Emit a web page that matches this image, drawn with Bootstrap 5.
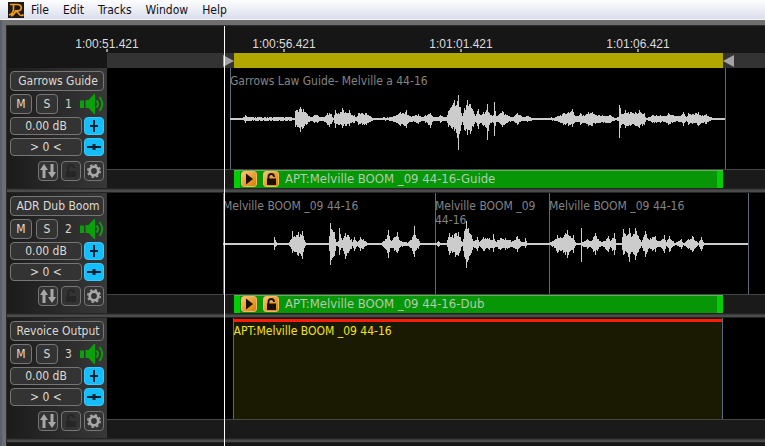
<!DOCTYPE html>
<html lang="en">
<head>
<meta charset="utf-8">
<meta name="viewport" content="width=device-width, initial-scale=1">
<title>Revoice session</title>
<link href="https://cdn.jsdelivr.net/npm/bootstrap@5.3.0/dist/css/bootstrap.min.css" rel="stylesheet">
<style>
  body { font-family: "DejaVu Sans Condensed", "Noto Sans", sans-serif; font-size: 12px; line-height: 14px; background: #161616; color: #d6d2cc; }
  button { font: inherit; }
  .menu-strip { height: 20px; padding-left: 8px; background: linear-gradient(#fdfdfe, #eef0f7 45%, #d9deec); border-bottom: 1px solid #f4f4f6; }
  .menu-strip a { color: #101018; }
  .menu-list { gap: 14px; margin-left: 7px; }
  .window-frame { border-left: 2px solid #56616f; background: #6e6e6e; padding: 5px 0 0 4px; }
  .session { border-left: 1px solid #2c2c2c; border-top: 1px solid #2c2c2c; background: #161616; }
  .side { width: 100px; flex: none; }
  .lane { flex: 1 1 0; min-width: 0; }
  .seg { flex-basis: 0; flex-shrink: 1; min-width: 0; }
  .ruler { height: 27px; font-family: "Liberation Sans", Arial, sans-serif; line-height: 14px; padding-top: 11px; }
  .ruler-label { width: 64px; margin-left: -32px; text-align: center; color: #dcdcdc; white-space: nowrap; }
  .ruler-label::after { content: ""; display: block; width: 2px; height: 3px; margin: -2px auto 0; background: #999; }
  .range { height: 15px; background: #333; }
  .range-fill { background: #b0a800; }
  .track-side { background: linear-gradient(90deg, #1b1b1b, #383838); padding: 3px 3px 0; }
  .tk { border: 1px solid #767676; border-radius: 4px; background: #333; color: #dedad4; padding: 0; line-height: 16px; }
  .tk-name { height: 20px; width: 94px; margin-bottom: 3px; padding-left: 2px; white-space: nowrap; }
  .tk-sq { height: 20px; width: 22px; }
  .tk-val { height: 18px; width: 72px; }
  .tk-blue { height: 18px; width: 20px; border-color: #35caff; background: #14bdfb; }
  .tk-ico { height: 20px; width: 20px; }
  .tk-row { margin-bottom: 3px; }
  .tk-last { gap: 3px; margin-top: 5px; }
  .tk svg, .spk svg { display: block; margin: auto; }
  .spk { width: 25px; height: 20px; border: 0; padding: 0; background: none; }
  .audio { height: 101px; background: #000; }
  .clip { color: #848484; }
  .clip, .clip-end { box-shadow: inset 1px 0 #5c6b7c; }
  .clip-name { padding-top: 6px; line-height: 14px; }
  .wave { fill: #ccc; }
  .apt-row { height: 19px; background: #1a1a1a; border-top: 1px solid #464646; }
  .apt { background: #069606; box-shadow: inset 0 1px #5cb45c, inset 6px 0 #06cc06, inset -6px 0 #06cc06; color: #b4ccb0; font-size: 13px; }
  .apt span { margin-left: 6px; }
  .apt-btn { width: 16px; height: 16px; border: 1px solid #f5b95c; border-radius: 3px; padding: 0; background: linear-gradient(135deg, #ffc36d, #d87c0a); }
  .apt-btn:first-child { margin-left: 7px; }
  .apt-btn + .apt-btn { margin-left: 6px; }
  .apt-btn svg { display: block; margin: auto; }
  .divider { height: 5px; background: linear-gradient(#242424 0 1px, #3a3a3a 1px 2px, #4b4b4b 2px 4px, #242424 4px); }
  .output { box-shadow: inset 1px 0 #5c6b7c, inset -1px 0 #5c6b7c; background: #1a1a02; color: #f6e316; padding: 1px 1px 0; }
  .output-bar { height: 3px; background: #ff1c06; margin-bottom: 2px; }
  .playhead-layer { left: 100px; right: 0; top: 0; bottom: 0; pointer-events: none; }
  .playhead { width: 1px; background: #fff; }
</style>
<script src="https://cdn.jsdelivr.net/npm/bootstrap@5.3.0/dist/js/bootstrap.bundle.min.js"></script>
</head>
<body class="d-flex flex-column min-vh-100 overflow-hidden">

<svg class="d-none" aria-hidden="true">
  <symbol id="i-speaker" viewBox="0 0 25 20"><path fill="#0aa00a" d="M1 6.500h4v7.500H1zM6.500 6h3l5.500-6h1v20h-1l-5.500-6h-3z"/><path d="M17.500 6.500q3 3.500 0 7M20.500 3q5.500 7 0 14" fill="none" stroke="#0aa00a" stroke-width="2"/></symbol>
  <symbol id="i-vol" viewBox="0 0 18 16"><path d="M9 2v12M5 8h8" stroke="#06222e" stroke-width="2" fill="none"/></symbol>
  <symbol id="i-pan" viewBox="0 0 18 16"><path d="M2 8h14" stroke="#06222e" stroke-width="2"/><path d="M7.500 5h3v6h-3z" fill="#06222e"/></symbol>
  <symbol id="i-arrows" viewBox="0 0 18 18"><path fill="#a8a8a8" d="M5 2l4 6H6.500v8h-3V8H1zM13 16l-4-6h2.500V2h3v8H17z"/></symbol>
  <symbol id="i-lock-off" viewBox="0 0 18 18"><path fill="#262626" d="M4 9h10v6H4z"/><path d="M6 9V6q0-3 3-3t3 3" fill="none" stroke="#262626" stroke-width="2"/></symbol>
  <symbol id="i-gear" viewBox="0 0 18 18"><circle cx="9" cy="9" r="4.300" fill="none" stroke="#a8a8a8" stroke-width="2.800"/><circle cx="9" cy="9" r="6.200" fill="none" stroke="#a8a8a8" stroke-width="1.600" stroke-dasharray="2.400 2.470"/></symbol>
  <symbol id="i-play" viewBox="0 0 14 14"><path d="M4 1.500l7 5.500-7 5.500z" fill="#1a0f02"/></symbol>
  <symbol id="i-lock" viewBox="0 0 14 14"><path fill="#1a0f02" d="M3 6.500h9V13H3z"/><path d="M4.500 7V4.500q0-2.500 2.700-2.500t2.800 2.500V5" fill="none" stroke="#1a0f02" stroke-width="1.800"/></symbol>
</svg>

<nav class="menu-strip d-flex align-items-center" aria-label="Main menu">
  <svg width="16" height="16" viewBox="0 0 16 16" role="img" aria-label="Revoice"><path fill="#1f1a14" d="M0 0h16v16H0z"/><path d="M2 2.500h8q3.300 .3 3.300 3.200t-3.300 3.200H8L12 13q1.500 1.300 3.500-.5M5.500 2.500V7q0 4.500-4.500 6M7.500 9Q7 12 3 14" fill="none" stroke="#f09a26" stroke-width="1.600"/></svg>
  <ul class="menu-list d-flex list-unstyled mb-0">
    <li><a class="text-decoration-none" href="#">File</a></li>
    <li><a class="text-decoration-none" href="#">Edit</a></li>
    <li><a class="text-decoration-none" href="#">Tracks</a></li>
    <li><a class="text-decoration-none" href="#">Window</a></li>
    <li><a class="text-decoration-none" href="#">Help</a></li>
  </ul>
</nav>

<main class="window-frame flex-grow-1 d-flex flex-column">
  <div class="session position-relative flex-grow-1">
    <div class="ruler d-flex">
      <div class="side"></div>
      <div class="lane d-flex">
        <div class="seg" style="flex-grow:177"><div class="ruler-label">1:00:51.421</div></div>
        <div class="seg" style="flex-grow:177"><div class="ruler-label">1:00:56.421</div></div>
        <div class="seg" style="flex-grow:177"><div class="ruler-label">1:01:01.421</div></div>
        <div class="seg" style="flex-grow:127"><div class="ruler-label">1:01:06.421</div></div>
      </div>
    </div>
    <div class="d-flex">
      <div class="side"></div>
      <div class="lane range d-flex">
        <div class="seg d-flex justify-content-end align-items-center" style="flex-grow:127"><svg width="11" height="12"><path d="M0 0l11 6-11 6z" fill="#a4a4a4"/></svg></div>
        <div class="seg range-fill" style="flex-grow:489"></div>
        <div class="seg d-flex align-items-center" style="flex-grow:42"><svg width="11" height="12"><path d="M11 0v12L0 6z" fill="#a4a4a4"/></svg></div>
      </div>
    </div>

    <section class="d-flex" aria-label="Garrows Guide">
      <div class="side track-side">
        <button class="tk tk-name d-block">Garrows Guide</button>
        <div class="tk-row d-flex align-items-center"><button class="tk tk-sq">M</button><button class="tk tk-sq ms-1">S</button><span class="flex-grow-1 text-center">1</span><button class="spk" aria-label="Monitor"><svg width="25" height="20"><use href="#i-speaker"/></svg></button></div>
        <div class="tk-row d-flex justify-content-between"><button class="tk tk-val">0.00 dB</button><button class="tk tk-blue" aria-label="Volume"><svg width="18" height="16"><use href="#i-vol"/></svg></button></div>
        <div class="tk-row d-flex justify-content-between"><button class="tk tk-val">&gt; 0 &lt;</button><button class="tk tk-blue" aria-label="Pan"><svg width="18" height="16"><use href="#i-pan"/></svg></button></div>
        <div class="tk-last d-flex justify-content-end"><button class="tk tk-ico" aria-label="Swap"><svg width="18" height="18"><use href="#i-arrows"/></svg></button><button class="tk tk-ico" aria-label="Lock"><svg width="18" height="18"><use href="#i-lock-off"/></svg></button><button class="tk tk-ico" aria-label="Settings"><svg width="18" height="18"><use href="#i-gear"/></svg></button></div>
      </div>
      <div class="lane">
        <div class="audio d-flex">
          <div class="seg" style="flex-grow:123"></div>
          <div class="seg clip position-relative" style="flex-grow:495" data-from="230" data-to="725" data-peaks="230:1 242:1 245:4 248:2 290:2 294:1 295:8 300:12/13 303:10/9 307:5 310:2 314:4 317:4 320:2 325:3 327:6 329:6/8 331:5 333:1 335:9 338:6 342:11/9 345:7 349:9/7 351:4 354:4 356:2 358:6 362:6 366:6 370:3 374:1 390:2 396:4 400:7 403:6 406:9 408:4 412:3 418:5 421:2 425:4 430:6/9 432:3 436:2 440:4 446:2 448:8 452:14/10 454:19/12 456:14 458:24/31 460:12 462:3 464:11 467:19/16 470:15 473:8 475:3 478:10 480:4 483:7 486:9 487:15/21 489:6 491:4 493:4 494:17 496:3 502:8 507:4 512:2 517:6 522:2 527:3 535:1 545:1 555:2 560:4 563:6 568:7 572:10/8 574:4 577:3 580:6 583:4 588:7 592:7 598:4 610:4 615:1 618:2 619:14/19 620:11/9 622:5 625:9 630:7 635:7 639:9 644:6 646:1 652:4 660:4 664:3 668:6 672:4 680:3 683:7 686:2 688:6 692:5 698:7 702:4 706:5 710:2 715:1 725:1">
            <div class="clip-name">Garrows Law Guide- Melville a 44-16</div>
          </div>
          <div class="seg clip-end" style="flex-grow:40"></div>
        </div>
        <div class="apt-row d-flex">
          <div class="seg" style="flex-grow:127"></div>
          <div class="seg apt d-flex align-items-center" style="flex-grow:489"><button class="apt-btn" aria-label="Play"><svg width="14" height="14"><use href="#i-play"/></svg></button><button class="apt-btn" aria-label="Unlock"><svg width="14" height="14"><use href="#i-lock"/></svg></button><span>APT:Melville BOOM _09 44-16-Guide</span></div>
          <div class="seg" style="flex-grow:42"></div>
        </div>
      </div>
    </section>
    <div class="divider"></div>

    <section class="d-flex" aria-label="ADR Dub Boom">
      <div class="side track-side">
        <button class="tk tk-name d-block">ADR Dub Boom</button>
        <div class="tk-row d-flex align-items-center"><button class="tk tk-sq">M</button><button class="tk tk-sq ms-1">S</button><span class="flex-grow-1 text-center">2</span><button class="spk" aria-label="Monitor"><svg width="25" height="20"><use href="#i-speaker"/></svg></button></div>
        <div class="tk-row d-flex justify-content-between"><button class="tk tk-val">0.00 dB</button><button class="tk tk-blue" aria-label="Volume"><svg width="18" height="16"><use href="#i-vol"/></svg></button></div>
        <div class="tk-row d-flex justify-content-between"><button class="tk tk-val">&gt; 0 &lt;</button><button class="tk tk-blue" aria-label="Pan"><svg width="18" height="16"><use href="#i-pan"/></svg></button></div>
        <div class="tk-last d-flex justify-content-end"><button class="tk tk-ico" aria-label="Swap"><svg width="18" height="18"><use href="#i-arrows"/></svg></button><button class="tk tk-ico" aria-label="Lock"><svg width="18" height="18"><use href="#i-lock-off"/></svg></button><button class="tk tk-ico" aria-label="Settings"><svg width="18" height="18"><use href="#i-gear"/></svg></button></div>
      </div>
      <div class="lane">
        <div class="audio d-flex">
          <div class="seg" style="flex-grow:116"></div>
          <div class="seg clip position-relative" style="flex-grow:212" data-from="223" data-to="435" data-peaks="223:1 273:1 274:7/6 276:2 278:1 288:1 291:5 292:13/9 294:8 298:12 300:10 302:13/15 304:4 306:1 328:1 330:21 332:14 334:12 336:2 338:3 339:16/11 342:4 345:11/15 348:9 351:5 352:2 354:7 357:2 360:7 363:5 368:1 380:1 385:5 388:14 390:4 394:7 397:12/9 400:3 408:2 410:4 412:7 414:18/13 416:6 418:5 420:1 435:1">
            <div class="clip-name">Melville BOOM _09 44-16</div>
          </div>
          <div class="seg clip position-relative" style="flex-grow:114" data-from="435" data-to="549" data-peaks="435:1 438:3 440:1 446:1 449:11 452:9 455:11/13 458:12 460:7 462:2 464:13 466:23/24 468:16 471:9 473:3 477:7 479:2 483:7 489:6 492:4 493:10/8 495:3 500:6 505:6 512:3 517:8 520:3 524:2 525:6/4 527:1 549:1">
            <div class="clip-name">Melville BOOM _09 44-16</div>
          </div>
          <div class="seg clip position-relative" style="flex-grow:199" data-from="549" data-to="748" data-peaks="549:1 554:4 557:9 560:7 565:11 567:14 569:8 573:9 575:2 579:1 580:1 581:16/18 582:2 587:5 590:3 595:11 598:5 602:2 608:8 610:3 614:11 616:1 621:1 623:15/11 627:9 629:16/18 632:8 635:16 638:8 641:2 645:13 648:5 652:7 655:8 657:3 662:5 664:9 666:2 669:8 675:1 681:5 683:1 688:5 692:8 698:1 701:7 704:1 748:1">
            <div class="clip-name">Melville BOOM _09 44-16</div>
          </div>
          <div class="seg clip-end" style="flex-grow:17"></div>
        </div>
        <div class="apt-row d-flex">
          <div class="seg" style="flex-grow:127"></div>
          <div class="seg apt d-flex align-items-center" style="flex-grow:489"><button class="apt-btn" aria-label="Play"><svg width="14" height="14"><use href="#i-play"/></svg></button><button class="apt-btn" aria-label="Unlock"><svg width="14" height="14"><use href="#i-lock"/></svg></button><span>APT:Melville BOOM _09 44-16-Dub</span></div>
          <div class="seg" style="flex-grow:42"></div>
        </div>
      </div>
    </section>
    <div class="divider"></div>

    <section class="d-flex" aria-label="Revoice Output">
      <div class="side track-side">
        <button class="tk tk-name d-block">Revoice Output</button>
        <div class="tk-row d-flex align-items-center"><button class="tk tk-sq">M</button><button class="tk tk-sq ms-1">S</button><span class="flex-grow-1 text-center">3</span><button class="spk" aria-label="Monitor"><svg width="25" height="20"><use href="#i-speaker"/></svg></button></div>
        <div class="tk-row d-flex justify-content-between"><button class="tk tk-val">0.00 dB</button><button class="tk tk-blue" aria-label="Volume"><svg width="18" height="16"><use href="#i-vol"/></svg></button></div>
        <div class="tk-row d-flex justify-content-between"><button class="tk tk-val">&gt; 0 &lt;</button><button class="tk tk-blue" aria-label="Pan"><svg width="18" height="16"><use href="#i-pan"/></svg></button></div>
        <div class="tk-last d-flex justify-content-end"><button class="tk tk-ico" aria-label="Swap"><svg width="18" height="18"><use href="#i-arrows"/></svg></button><button class="tk tk-ico" aria-label="Lock"><svg width="18" height="18"><use href="#i-lock-off"/></svg></button><button class="tk tk-ico" aria-label="Settings"><svg width="18" height="18"><use href="#i-gear"/></svg></button></div>
      </div>
      <div class="lane">
        <div class="audio d-flex">
          <div class="seg" style="flex-grow:126"></div>
          <div class="seg output" style="flex-grow:490"><div class="output-bar"></div>APT:Melville BOOM _09 44-16</div>
          <div class="seg" style="flex-grow:42"></div>
        </div>
        <div class="apt-row"></div>
      </div>
    </section>
    <div class="divider"></div>

    <div class="playhead-layer position-absolute d-flex">
      <div class="seg" style="flex-grow:117"></div>
      <div class="playhead"></div>
      <div class="seg" style="flex-grow:540"></div>
    </div>
  </div>
</main>

<script>
  // Draw each clip's waveform from its peak list ("time:up/down").
  document.querySelectorAll('[data-peaks]').forEach(function (clip) {
    var from = +clip.dataset.from, to = +clip.dataset.to, seed = from;
    var keys = clip.dataset.peaks.split(' ').map(function (k) {
      var p = k.split(':'), a = p[1].split('/');
      return [+p[0], +a[0], +(a[1] || a[0])];
    });
    function noise() { seed = (seed * 16807) % 2147483647; return 0.65 + 0.35 * seed / 2147483647; }
    noise(); noise();
    var d = '', i = 0;
    for (var x = from; x < to; x++) {
      while (i < keys.length - 2 && keys[i + 1][0] <= x) i++;
      var a = keys[i], b = keys[i + 1], t = (x - a[0]) / (b[0] - a[0]);
      var n = t === 0 ? 1 : noise(), m = t === 0 ? 1 : noise();
      var up = Math.max(1, Math.round((a[1] + (b[1] - a[1]) * t) * n));
      var dn = Math.max(1, Math.round((a[2] + (b[2] - a[2]) * t) * m));
      d += 'M' + (x - from) + ' ' + (51 - up) + 'h1v' + (up + dn) + 'h-1z';
    }
    clip.insertAdjacentHTML('beforeend', '<svg class="wave position-absolute top-0 start-0 w-100 h-100" preserveAspectRatio="none" shape-rendering="crispEdges" viewBox="0 0 ' + (to - from) + ' 101"><path d="' + d + '"/></svg>');
  });
</script>
</body>
</html>
